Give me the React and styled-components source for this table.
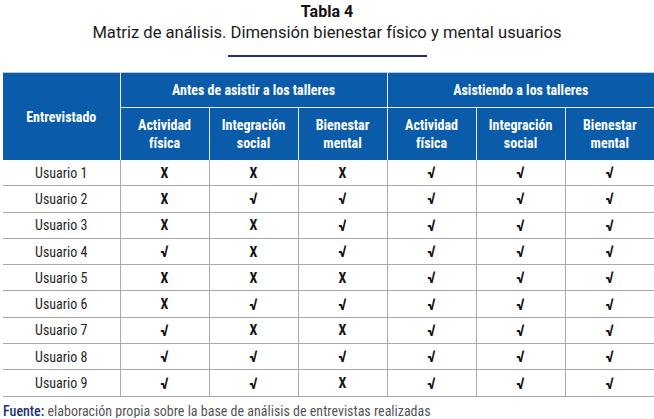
import React from 'react';
import styled, { createGlobalStyle } from 'styled-components';

const GlobalStyle = createGlobalStyle`
  html, body {
    margin: 0;
    padding: 0;
    background: #ffffff;
  }
  body {
    font-family: "Roboto Condensed", "Liberation Sans Narrow", Roboto, sans-serif;
    color: #1f1f1f;
  }
`;

const blue = '#0a5cab';
const gridLine = '#a9a9a9';

const groups = ['Antes de asistir a los talleres', 'Asistiendo a los talleres'];
const columns = [
  ['Actividad', 'física'],
  ['Integración', 'social'],
  ['Bienestar', 'mental'],
];

// 1 = cumple (√), 0 = no cumple (X)
const rows = [
  [0, 0, 0, 1, 1, 1],
  [0, 1, 1, 1, 1, 1],
  [0, 0, 1, 1, 1, 1],
  [1, 0, 1, 1, 1, 1],
  [0, 0, 0, 1, 1, 1],
  [0, 1, 1, 1, 1, 1],
  [1, 0, 0, 1, 1, 1],
  [1, 1, 1, 1, 1, 1],
  [1, 1, 0, 1, 1, 1],
];

export default function App() {
  return (
    <Page>
      <GlobalStyle />
      <Heading>
        <Label>Tabla 4</Label>
        <Subtitle>Matriz de análisis. Dimensión bienestar físico y mental usuarios</Subtitle>
        <Rule />
      </Heading>
      <Table>
        <colgroup>
          <col style={{ width: 117 }} />
          {[0, 1, 2, 3, 4, 5].map(i => (
            <col key={i} style={{ width: 89 }} />
          ))}
        </colgroup>
        <thead>
          <tr>
            <HeadCell rowSpan={2}>Entrevistado</HeadCell>
            {groups.map(g => (
              <GroupCell key={g} colSpan={3}>
                {g}
              </GroupCell>
            ))}
          </tr>
          <tr>
            {groups.map(g =>
              columns.map(([a, b]) => (
                <SubCell key={g + a}>
                  {a}
                  <br />
                  {b}
                </SubCell>
              ))
            )}
          </tr>
        </thead>
        <tbody>
          {rows.map((marks, i) => (
            <tr key={i}>
              <NameCell>Usuario {i + 1}</NameCell>
              {marks.map((ok, j) => (
                <MarkCell key={j} $ok={ok}>
                  {ok ? '√' : 'X'}
                </MarkCell>
              ))}
            </tr>
          ))}
        </tbody>
      </Table>
      <Source>
        <strong>Fuente:</strong> elaboración propia sobre la base de análisis de entrevistas realizadas
      </Source>
    </Page>
  );
}

const Page = styled.div`
  width: 654px;
  padding-top: 2px;
`;

const Heading = styled.div`
  display: flex;
  flex-direction: column;
  align-items: center;
  font-family: Roboto, sans-serif;
`;

const Label = styled.div`
  font-weight: 700;
  font-size: 16px;
  line-height: 20px;
  color: #111;
`;

const Subtitle = styled.div`
  font-size: 16.6px;
  line-height: 22px;
  color: #1a1a1a;
`;

const Rule = styled.div`
  width: 199px;
  height: 2px;
  margin-top: 11px;
  background: #1c3370;
`;

const Table = styled.table`
  margin: 15px 3px 0 3px;
  width: 648px;
  border-collapse: collapse;
  table-layout: fixed;
  border-top: 1px solid #b9c7d8;
`;

const HeadCell = styled.th`
  background: ${blue};
  color: #ffffff;
  font-size: 14px;
  font-weight: 700;
  text-align: center;
  border-right: 1px solid #e6eef7;
  padding: 0;
`;

const GroupCell = styled(HeadCell)`
  height: 34px;
  border-bottom: 1px solid #e6eef7;
  &:last-child {
    border-right: none;
  }
`;

const SubCell = styled(HeadCell)`
  height: 52px;
  line-height: 18px;
  &:last-child {
    border-right: none;
  }
`;

const BodyCell = styled.td`
  height: 25.3px;
  text-align: center;
  padding: 0;
  border-bottom: 1px solid ${gridLine};
  border-right: 1px solid ${gridLine};
`;

const NameCell = styled(BodyCell)`
  font-size: 14px;
  color: #1f1f1f;
`;

const MarkCell = styled(BodyCell)`
  font-size: ${p => (p.$ok ? '16px' : '14px')};
  font-weight: 700;
  color: #111;
  &:last-child {
    border-right: none;
  }
`;

const Source = styled.div`
  margin: 7px 0 0 3px;
  font-size: 14px;
  line-height: 14px;
  color: #555;

  strong {
    font-weight: 500;
    color: #1c3370;
  }
`;
